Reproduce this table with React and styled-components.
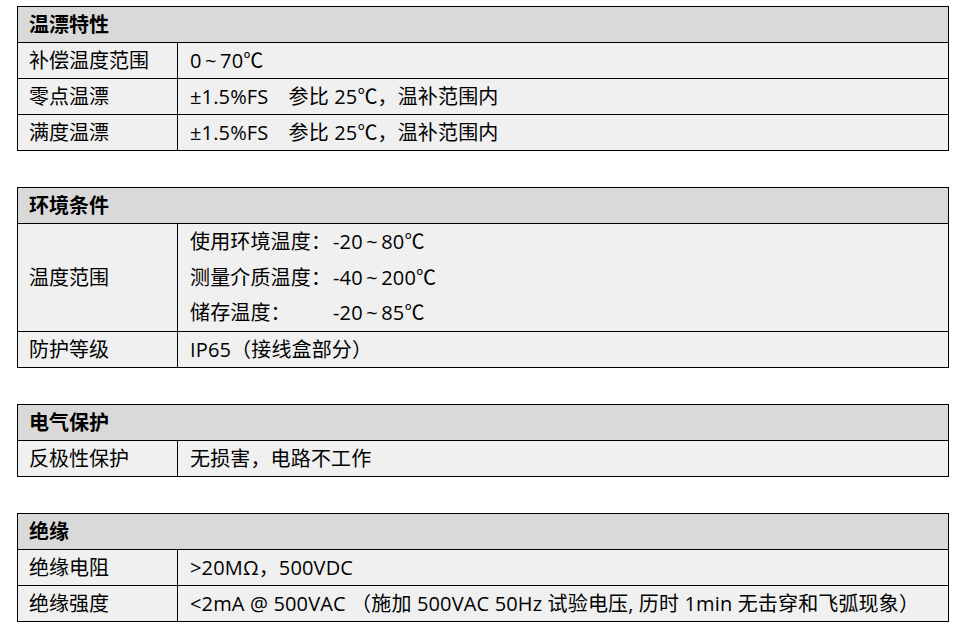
import styled, { createGlobalStyle } from "styled-components";

const GlobalStyle = createGlobalStyle`
  body {
    margin: 0;
    background: #ffffff;
    font-family: "Open Sans", "Noto Sans CJK SC", sans-serif;
    color: #000;
  }
`;

const Page = styled.div`
  padding: 6px 21px 0 17px;
  display: flex;
  flex-direction: column;
  gap: 36px;
`;

const Table = styled.table`
  width: 932px;
  border-collapse: collapse;
  font-size: 20px;
  table-layout: fixed;
`;

const LabelCol = styled.col`
  width: 160px;
`;

const HeadCell = styled.th`
  background: #d9d9d9;
  border: 1px solid #000;
  height: 35px;
  padding: 0 11px;
  text-align: left;
  font-weight: 700;
  line-height: 35px;
`;

const LabelCell = styled.td`
  background: #f0f0f0;
  border: 1px solid #000;
  height: 35px;
  padding: 0 11px;
  line-height: 35px;
  white-space: nowrap;
`;

const ValueCell = styled.td`
  background: #f0f0f0;
  border: 1px solid #000;
  height: 35px;
  padding: 0 12px;
  line-height: 35px;
  white-space: nowrap;
  letter-spacing: 0.15px;
`;

const LineGrid = styled.div`
  display: grid;
  grid-template-columns: 143px auto;
  grid-auto-rows: 35.5px;
  align-items: center;
  justify-content: start;
  line-height: 35px;
`;

const T = "\u2009~\u2009";

const sections = [
  {
    title: "温漂特性",
    rows: [
      ["补偿温度范围", `0${T}70℃`],
      ["零点温漂", "±1.5%FS\u3000参比 25℃，温补范围内"],
      ["满度温漂", "±1.5%FS\u3000参比 25℃，温补范围内"],
    ],
  },
  {
    title: "环境条件",
    rows: [
      [
        "温度范围",
        [
          ["使用环境温度：", `-20${T}80℃`],
          ["测量介质温度：", `-40${T}200℃`],
          ["储存温度：", `-20${T}85℃`],
        ],
      ],
      ["防护等级", "IP65（接线盒部分）"],
    ],
  },
  {
    title: "电气保护",
    rows: [["反极性保护", "无损害，电路不工作"]],
  },
  {
    title: "绝缘",
    rows: [
      ["绝缘电阻", ">20MΩ，500VDC"],
      [
        "绝缘强度",
        "<2mA @ 500VAC （施加 500VAC 50Hz 试验电压, 历时 1min 无击穿和飞弧现象）",
      ],
    ],
  },
];

function App() {
  return (
    <>
      <GlobalStyle />
      <Page>
        {sections.map((s) => (
          <Table key={s.title}>
            <colgroup>
              <LabelCol />
              <col />
            </colgroup>
            <thead>
              <tr>
                <HeadCell colSpan={2}>{s.title}</HeadCell>
              </tr>
            </thead>
            <tbody>
              {s.rows.map(([label, value]) => (
                <tr key={label}>
                  <LabelCell>{label}</LabelCell>
                  <ValueCell>
                    {Array.isArray(value) ? (
                      <LineGrid>
                        {value.flatMap(([k, v]) => [
                          <span key={k}>{k}</span>,
                          <span key={k + "v"}>{v}</span>,
                        ])}
                      </LineGrid>
                    ) : (
                      value
                    )}
                  </ValueCell>
                </tr>
              ))}
            </tbody>
          </Table>
        ))}
      </Page>
    </>
  );
}

export default App;
